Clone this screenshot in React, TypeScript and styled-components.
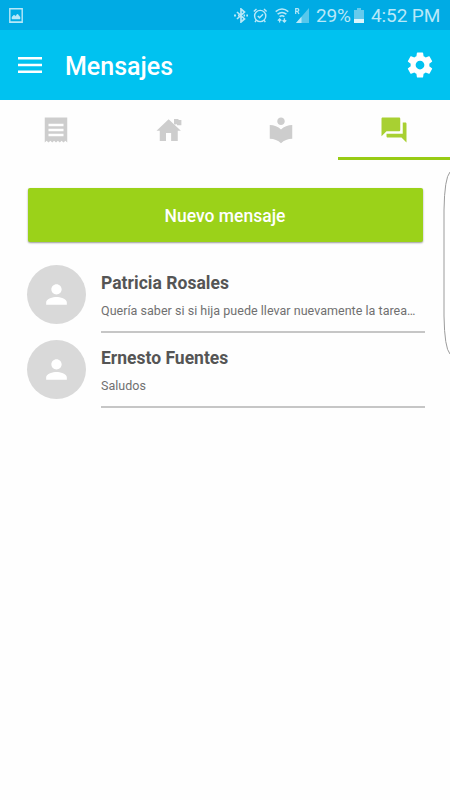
import React from "react";
import styled, { createGlobalStyle } from "styled-components";

const GlobalStyle = createGlobalStyle`
  * { box-sizing: border-box; }
  body { margin: 0; background: #fefefe; font-family: Roboto, "Noto Sans", sans-serif; }
`;

const Screen = styled.div`
  position: relative;
  width: 450px;
  height: 800px;
  overflow: hidden;
  background: #fefefe;
`;

const StatusBar = styled.div`
  display: flex;
  align-items: center;
  height: 30px;
  padding: 0 10px 0 9px;
  background: #00abe4;
  color: #b9e8f8;
`;

const StatusIcon = styled.svg<{ $gap?: number }>`
  flex: none;
  display: block;
  margin-right: ${(p) => p.$gap ?? 0}px;
`;

const Spacer = styled.div`
  flex: 1;
`;

const StatusText = styled.span<{ $width: number; $gap?: number; $spacing?: number }>`
  flex: none;
  width: ${(p) => p.$width}px;
  margin-right: ${(p) => p.$gap ?? 0}px;
  padding-top: 1px;
  font-size: 19px;
  line-height: 30px;
  letter-spacing: ${(p) => p.$spacing ?? 0}px;
  white-space: nowrap;
`;

const Header = styled.header`
  display: flex;
  align-items: center;
  height: 70px;
  padding: 0 15px 0 18px;
  background: #00c2f0;
  color: #fff;
`;

const IconButton = styled.button`
  display: flex;
  padding: 0;
  border: 0;
  background: none;
  color: inherit;
`;

const Title = styled.h1`
  flex: 1;
  margin: 3px 0 0 23px;
  font-size: 25px;
  line-height: 28px;
  font-weight: 500;
  letter-spacing: 0;
`;

const Tabs = styled.nav`
  display: grid;
  grid-template-columns: repeat(4, 1fr);
  height: 60px;
`;

const Tab = styled.button<{ $active?: boolean }>`
  display: flex;
  justify-content: center;
  padding: 15px 0 0;
  border: 0;
  border-bottom: 3px solid ${(p) => (p.$active ? "#98cb14" : "transparent")};
  background: none;
  color: ${(p) => (p.$active ? "#a8d032" : "#cdcdcd")};
`;

const Content = styled.main`
  padding: 27.5px 25px 0 27.5px;
`;

const NewMessage = styled.button`
  display: block;
  width: 395px;
  height: 54.5px;
  padding: 2px 0 0;
  border: 0;
  border-radius: 2px;
  background: #9bd219;
  color: #fff;
  font: 500 17.5px/20px Roboto, sans-serif;
  box-shadow: 0 1px 2px rgba(0, 0, 0, 0.4);
`;

const List = styled.div`
  margin: 23px 0 0 -0.5px;
`;

const Row = styled.div`
  display: flex;
  height: 75px;
`;

const Avatar = styled.div`
  display: flex;
  flex: none;
  align-items: center;
  justify-content: center;
  width: 59px;
  height: 59px;
  margin: 0.4px 15px 0 0;
  border-radius: 50%;
  background: #d9d9d9;
  color: #fff;
`;

const Message = styled.div`
  flex: 1;
  min-width: 0;
  height: 68px;
  padding-top: 8px;
  border-bottom: 2px solid #c6c6c6;
`;

const Name = styled.div<{ $spacing: number }>`
  font-size: 17.5px;
  line-height: 20px;
  font-weight: 700;
  letter-spacing: ${(p) => p.$spacing}px;
  color: #555;
`;

const Preview = styled.div`
  margin-top: 10px;
  font-size: 12.5px;
  line-height: 16px;
  letter-spacing: 0.03px;
  color: #707070;
  white-space: nowrap;
`;

const EdgePanel = styled.svg`
  position: absolute;
  top: 170px;
  right: 0;
`;

const Icon = ({ d, size = 30 }: { d: string; size?: number }) => (
  <svg width={size} height={size} viewBox="0 0 24 24" fill="currentColor">
    <path d={d} />
  </svg>
);

const gear =
  "M19.43 12.98c.04-.32.07-.64.07-.98s-.03-.66-.07-.98l2.11-1.65c.19-.15.24-.42.12-.64l-2-3.46c-.12-.22-.39-.3-.61-.22l-2.49 1c-.52-.4-1.08-.73-1.69-.98l-.38-2.65C14.46 2.18 14.25 2 14 2h-4c-.25 0-.46.18-.49.42l-.38 2.65c-.61.25-1.17.59-1.69.98l-2.49-1c-.23-.09-.49 0-.61.22l-2 3.46c-.13.22-.07.49.12.64l2.11 1.65c-.04.32-.07.65-.07.98s.03.66.07.98l-2.11 1.65c-.19.15-.24.42-.12.64l2 3.46c.12.22.39.3.61.22l2.49-1c.52.4 1.08.73 1.69.98l.38 2.65c.03.24.24.42.49.42h4c.25 0 .46-.18.49-.42l.38-2.65c.61-.25 1.17-.59 1.69-.98l2.49 1c.23.09.49 0 .61-.22l2-3.46c.12-.22.07-.49-.12-.64l-2.11-1.65zM12 15.5c-1.93 0-3.5-1.57-3.5-3.5s1.57-3.5 3.5-3.5 3.5 1.57 3.5 3.5-1.57 3.5-3.5 3.5z";
const receipt =
  "M18 17H6v-2h12v2zm0-4H6v-2h12v2zm0-4H6V7h12v2zM3 22l1.5-1.5L6 22l1.5-1.5L9 22l1.5-1.5L12 22l1.5-1.5L15 22l1.5-1.5L18 22l1.5-1.5L21 22V2H3v20z";
const library =
  "M12 11.55C9.64 9.35 6.48 8 3 8v11c3.48 0 6.64 1.35 9 3.55 2.36-2.19 5.52-3.55 9-3.55V8c-3.48 0-6.64 1.35-9 3.55zM12 8c1.66 0 3-1.34 3-3s-1.34-3-3-3-3 1.34-3 3 1.34 3 3 3z";
const forum =
  "M21 6h-2v9H6v2c0 .55.45 1 1 1h11l4 4V7c0-.55-.45-1-1-1zm-4 6V3c0-.55-.45-1-1-1H3c-.55 0-1 .45-1 1v14l4-4h10c.55 0 1-.45 1-1z";
const schoolHouse =
  "M2 12.5L11.7 3.4L21.5 12.5H19V20.8H13.7V14.4H9.6V20.8H4.6V12.5ZM16 3.2H19.6V4H21.9V8.2H18.4V7.4H17V8L16 7Z";
const person =
  "M12 12c2.21 0 4-1.79 4-4s-1.79-4-4-4-4 1.79-4 4 1.79 4 4 4zm0 2c-2.67 0-8 1.34-8 4v2h16v-2c0-2.66-5.33-4-8-4z";

const tabs = [
  { label: "Avisos", icon: receipt },
  { label: "Escuela", icon: schoolHouse },
  { label: "Tareas", icon: library },
  { label: "Mensajes", icon: forum },
];

const messages = [
  {
    name: "Patricia Rosales",
    text: "Quería saber si si hija puede llevar nuevamente la tarea…",
    spacing: 0.03,
  },
  { name: "Ernesto Fuentes", text: "Saludos", spacing: 0 },
];

export default function App() {
  return (
    <>
      <GlobalStyle />
      <Screen>
        <StatusBar>
          <StatusIcon width="14" height="15" viewBox="0 0 14 15">
            <path d="M.8.8h12.4v13.4H.8z" fill="none" stroke="currentColor" strokeWidth="1.4" />
            <path d="M1 13.5h12M3 11V9l2-2 1.5 1.3L8.5 6 11 9v2z" fill="currentColor" stroke="currentColor" strokeWidth=".5" />
          </StatusIcon>
          <Spacer />
          <StatusIcon $gap={5} width="14" height="15" viewBox="0 0 14 15" fill="none" stroke="currentColor" strokeWidth="1.7">
            <path d="M3 4l7.5 7L7 14V1l3.5 3L3 11" />
            <path d="M0 7.5h2M4 7.5h1.5M9.5 7.5h1.5M12.3 7.5h1.7" strokeWidth="1.8" />
          </StatusIcon>
          <StatusIcon $gap={7} width="15" height="15" viewBox="0 0 15 15" fill="none" stroke="currentColor" strokeWidth="1.4">
            <circle cx="7.2" cy="8" r="5.6" />
            <path d="M.8 3.5L3.5 1M13.6 3.5L11 1M4.8 8l1.8 1.8L10 6.3M3.3 12.2l-1.3 2M11 12.2l1.3 2" />
          </StatusIcon>
          <StatusIcon $gap={6} width="14" height="15" viewBox="0 0 14 15" fill="none" stroke="currentColor" strokeWidth="1.5">
            <path d="M.7 3.6q6.3-5 12.6 0M2.6 6.2q4.4-3.4 8.8 0M4.6 8.6q2.4-1.8 4.8 0" />
            <path d="M4.6 14.5v-3.5M2.8 12.6L4.6 10.8 6.4 12.6M9.4 10.3v3.5M7.6 12.2L9.4 14l1.8-1.8" strokeWidth="1.3" />
          </StatusIcon>
          <StatusIcon $gap={7} width="14" height="15" viewBox="0 0 14 15">
            <path d="M14 0v15H1z" fill="#57c7ec" />
            <path d="M6.5 8.8V15H1z" fill="currentColor" />
            <path d="M.7 6V.7h1.8q1.3 0 1.3 1.3T2.5 3.3H.7M2.4 3.3L4 6" fill="none" stroke="currentColor" strokeWidth="1.2" />
          </StatusIcon>
          <StatusText $width={35} $gap={3} $spacing={-0.2}>29%</StatusText>
          <StatusIcon $gap={7} width="10" height="15" viewBox="0 0 10 15">
            <path d="M0 2h3V0h4v2h3v9H0z" fill="#66caec" />
            <path d="M0 11h10v4H0z" fill="#def5fc" />
          </StatusIcon>
          <StatusText $width={69} $spacing={-0.1}>4:52 PM</StatusText>
        </StatusBar>
        <Header>
          <IconButton aria-label="Menú">
            <svg width="24" height="16" viewBox="0 0 24 16" fill="currentColor">
              <path d="M0 0h24v2.5H0zM0 6.7h24v2.5H0zM0 13.4h24v2.5H0z" />
            </svg>
          </IconButton>
          <Title>Mensajes</Title>
          <IconButton aria-label="Ajustes">
            <Icon d={gear} />
          </IconButton>
        </Header>
        <Tabs>
          {tabs.map((tab) => (
            <Tab key={tab.label} aria-label={tab.label} $active={tab.icon === forum}>
              <Icon d={tab.icon} />
            </Tab>
          ))}
        </Tabs>
        <Content>
          <NewMessage>Nuevo mensaje</NewMessage>
          <List>
            {messages.map((m) => (
              <Row key={m.name}>
                <Avatar>
                  <Icon d={person} size={31} />
                </Avatar>
                <Message>
                  <Name $spacing={m.spacing}>{m.name}</Name>
                  <Preview>{m.text}</Preview>
                </Message>
              </Row>
            ))}
          </List>
        </Content>
        <EdgePanel width="7" height="186" viewBox="0 0 7 186" fill="none">
          <path d="M7 2Q1.5 8 1 40V146Q1.5 178 7 184" fill="#fff" stroke="#9c9c9c" strokeWidth="1" />
        </EdgePanel>
      </Screen>
    </>
  );
}
